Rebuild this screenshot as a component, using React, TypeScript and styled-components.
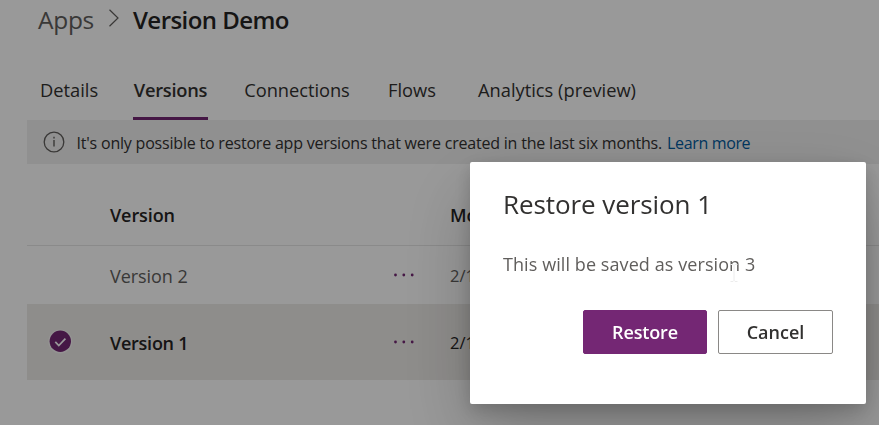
import React from 'react';
import styled, { createGlobalStyle } from 'styled-components';

const GlobalStyle = createGlobalStyle`
  * { box-sizing: border-box; }
  html, body { margin: 0; height: 100%; overflow: hidden; background: #fff; }
  body { font-family: 'Open Sans', 'Noto Sans', sans-serif; color: #323130; }
`;

const Page = styled.main`
  height: 425px;
  padding-left: 27px;
  overflow: hidden;
  display: flex;
  flex-direction: column;
`;

const Breadcrumb = styled.nav`
  height: 58px;
  padding: 0 0 18px 11px;
  display: flex;
  align-items: center;
  font-size: 24.5px;
  line-height: 40px;
  svg { margin: -5px 13px 0 14px; }
`;

const Crumb = styled.span<{ $current?: boolean }>`
  color: ${p => (p.$current ? '#252423' : '#605e5c')};
  font-size: ${p => (p.$current ? 24 : 24.5)}px;
  font-weight: ${p => (p.$current ? 600 : 400)};
  letter-spacing: ${p => (p.$current ? '-0.55px' : '-0.3px')};
  white-space: nowrap;
`;

const Tabs = styled.div`
  height: 62px;
  display: flex;
  padding-left: 13px;
`;

const Tab = styled.button<{ $active?: boolean; $width: number; $gap: number; $spacing: number }>`
  width: ${p => p.$width}px;
  margin-right: ${p => p.$gap}px;
  flex: none;
  padding: 4px 0 0;
  border: 0;
  border-bottom: 3px solid ${p => (p.$active ? '#742774' : 'transparent')};
  background: none;
  color: #323130;
  font-family: inherit;
  font-size: 18.3px;
  font-weight: ${p => (p.$active ? 600 : 400)};
  letter-spacing: ${p => p.$spacing}px;
  text-align: center;
  white-space: nowrap;
`;

const MessageBar = styled.div`
  height: 44px;
  flex: none;
  padding: 2px 0 0 16px;
  display: flex;
  align-items: center;
  background: #f0f0f0;
  font-size: 16px;
  letter-spacing: -0.2px;
  white-space: nowrap;
  svg { margin: -3px 11.5px 0 0; }
`;

const Link = styled.a`
  margin-left: 5px;
  color: #005a9e;
  letter-spacing: -0.35px;
`;

const Row = styled.div<{ $height: number; $selected?: boolean; $lined?: boolean }>`
  height: ${p => p.$height}px;
  flex: none;
  display: grid;
  grid-template-columns: 83px 283px 57px 1fr;
  align-items: center;
  padding-bottom: 1px;
  background: ${p => (p.$selected ? '#edebe8' : 'transparent')};
  border-bottom: ${p => (p.$lined ? '1px solid #e6e6e6' : '0')};
`;

const HeaderRow = styled(Row)`
  padding-top: 19px;
`;

const Check = styled.div`
  padding-left: 21px;
  display: flex;
`;

const Cell = styled.div<{ $strong?: boolean; $muted?: boolean; $small?: boolean; $spacing?: number }>`
  font-size: ${p => (p.$small ? 16.5 : 18)}px;
  line-height: 24px;
  margin-top: 2px;
  font-weight: ${p => (p.$strong ? 600 : 400)};
  color: ${p => (p.$muted ? '#605e5c' : '#252423')};
  letter-spacing: ${p => p.$spacing ?? 0}px;
  white-space: nowrap;
`;

const More = styled.div`
  display: flex;
  margin-top: 1px;
`;

const Overlay = styled.div`
  position: fixed;
  inset: 0;
  padding: 162px 0 0 470px;
  background: rgba(0, 0, 0, 0.4);
`;

const Dialog = styled.section`
  position: relative;
  width: 396px;
  height: 242px;
  padding: 24px 33px 50px;
  display: flex;
  flex-direction: column;
  background: #fff;
  border-radius: 2px;
  box-shadow: 0 32px 72px rgba(0, 0, 0, 0.22), 0 6px 18px rgba(0, 0, 0, 0.18);
`;

const Title = styled.h2`
  margin: 0;
  font-size: 26px;
  line-height: 36px;
  font-weight: 400;
  letter-spacing: -0.08px;
  color: #323130;
`;

const Body = styled.p`
  margin: 29px 0 0;
  font-size: 18px;
  line-height: 26px;
  letter-spacing: 0.08px;
  color: #605e5c;
`;

const Actions = styled.div`
  margin-top: auto;
  display: flex;
  justify-content: flex-end;
  gap: 11px;
`;

const Button = styled.button<{ $primary?: boolean }>`
  width: ${p => (p.$primary ? 124 : 115)}px;
  height: 44px;
  padding: 0 0 1px;
  border: 1px solid ${p => (p.$primary ? '#742774' : '#8a8886')};
  border-radius: 2px;
  background: ${p => (p.$primary ? '#742774' : '#fff')};
  color: ${p => (p.$primary ? '#fff' : '#323130')};
  font-family: inherit;
  font-size: 18px;
  font-weight: 600;
  letter-spacing: ${p => (p.$primary ? -0.15 : 0)}px;
`;

const Caret = styled.svg`
  position: absolute;
  left: 260px;
  top: 102px;
`;

const Dots = () => (
  <svg width="22" height="6" viewBox="0 0 22 6" fill="#742774">
    <circle cx="2.5" cy="3" r="1.4" />
    <circle cx="10.8" cy="3" r="1.4" />
    <circle cx="19.2" cy="3" r="1.4" />
  </svg>
);

const CheckIcon = () => (
  <svg width="25" height="25" viewBox="0 0 25 25" fill="none">
    <circle cx="12.3" cy="12.5" r="12" fill="#fff" fillOpacity="0.55" />
    <circle cx="12.3" cy="12.3" r="10.7" fill="#742774" />
    <path d="M7.3 12.9l3.5 3.6 6.6-6.8" stroke="#fff" strokeWidth="1.7" />
  </svg>
);

const tabs = [
  { label: 'Details', width: 58, gap: 35, spacing: 0 },
  { label: 'Versions', width: 75, gap: 36, spacing: -0.25, active: true },
  { label: 'Connections', width: 106, gap: 38, spacing: -0.05 },
  { label: 'Flows', width: 48, gap: 42, spacing: 0 },
  { label: 'Analytics (preview)', width: 158, gap: 0, spacing: 0 },
];

export default function App() {
  return (
    <>
      <GlobalStyle />
      <Page>
        <Breadcrumb>
          <Crumb>Apps</Crumb>
          <svg width="12" height="18" viewBox="0 0 12 18" fill="none" stroke="#605e5c" strokeWidth="1.2">
            <path d="M1.5 0.8l8.5 8.2-8.5 8.2" />
          </svg>
          <Crumb $current>Version Demo</Crumb>
        </Breadcrumb>
        <Tabs>
          {tabs.map(t => (
            <Tab key={t.label} $active={t.active} $width={t.width} $gap={t.gap} $spacing={t.spacing}>
              {t.label}
            </Tab>
          ))}
        </Tabs>
        <MessageBar>
          <svg width="22" height="22" viewBox="0 0 22 22" fill="none" stroke="#605e5c">
            <circle cx="11" cy="11" r="9.8" strokeWidth="1.3" />
            <path d="M11 9v6.5M11 5.8v1.6" strokeWidth="1.4" />
          </svg>
          <span>It's only possible to restore app versions that were created in the last six months.</span>
          <Link>Learn more</Link>
        </MessageBar>
        <HeaderRow $height={82} $lined>
          <span />
          <Cell $strong $spacing={-0.1}>Version</Cell>
          <span />
          <Cell $strong>Mo</Cell>
        </HeaderRow>
        <Row $height={58}>
          <span />
          <Cell $muted $spacing={-0.05}>Version 2</Cell>
          <More><Dots /></More>
          <Cell $muted $small>2/1</Cell>
        </Row>
        <Row $height={76} $selected>
          <Check><CheckIcon /></Check>
          <Cell $strong $spacing={-0.25}>Version 1</Cell>
          <More><Dots /></More>
          <Cell $small>2/1</Cell>
        </Row>
      </Page>
      <Overlay>
        <Dialog role="dialog" aria-modal="true">
          <Title>Restore version 1</Title>
          <Body>This will be saved as version 3</Body>
          <Actions>
            <Button $primary>Restore</Button>
            <Button>Cancel</Button>
          </Actions>
          <Caret width="8" height="18" viewBox="0 0 8 18" fill="none" stroke="#ececec">
            <path d="M0.5 0.5h2.5l1 1 1-1h2.5M4 1.5v15M0.5 17.5h2.5l1-1 1 1h2.5" />
          </Caret>
        </Dialog>
      </Overlay>
    </>
  );
}
